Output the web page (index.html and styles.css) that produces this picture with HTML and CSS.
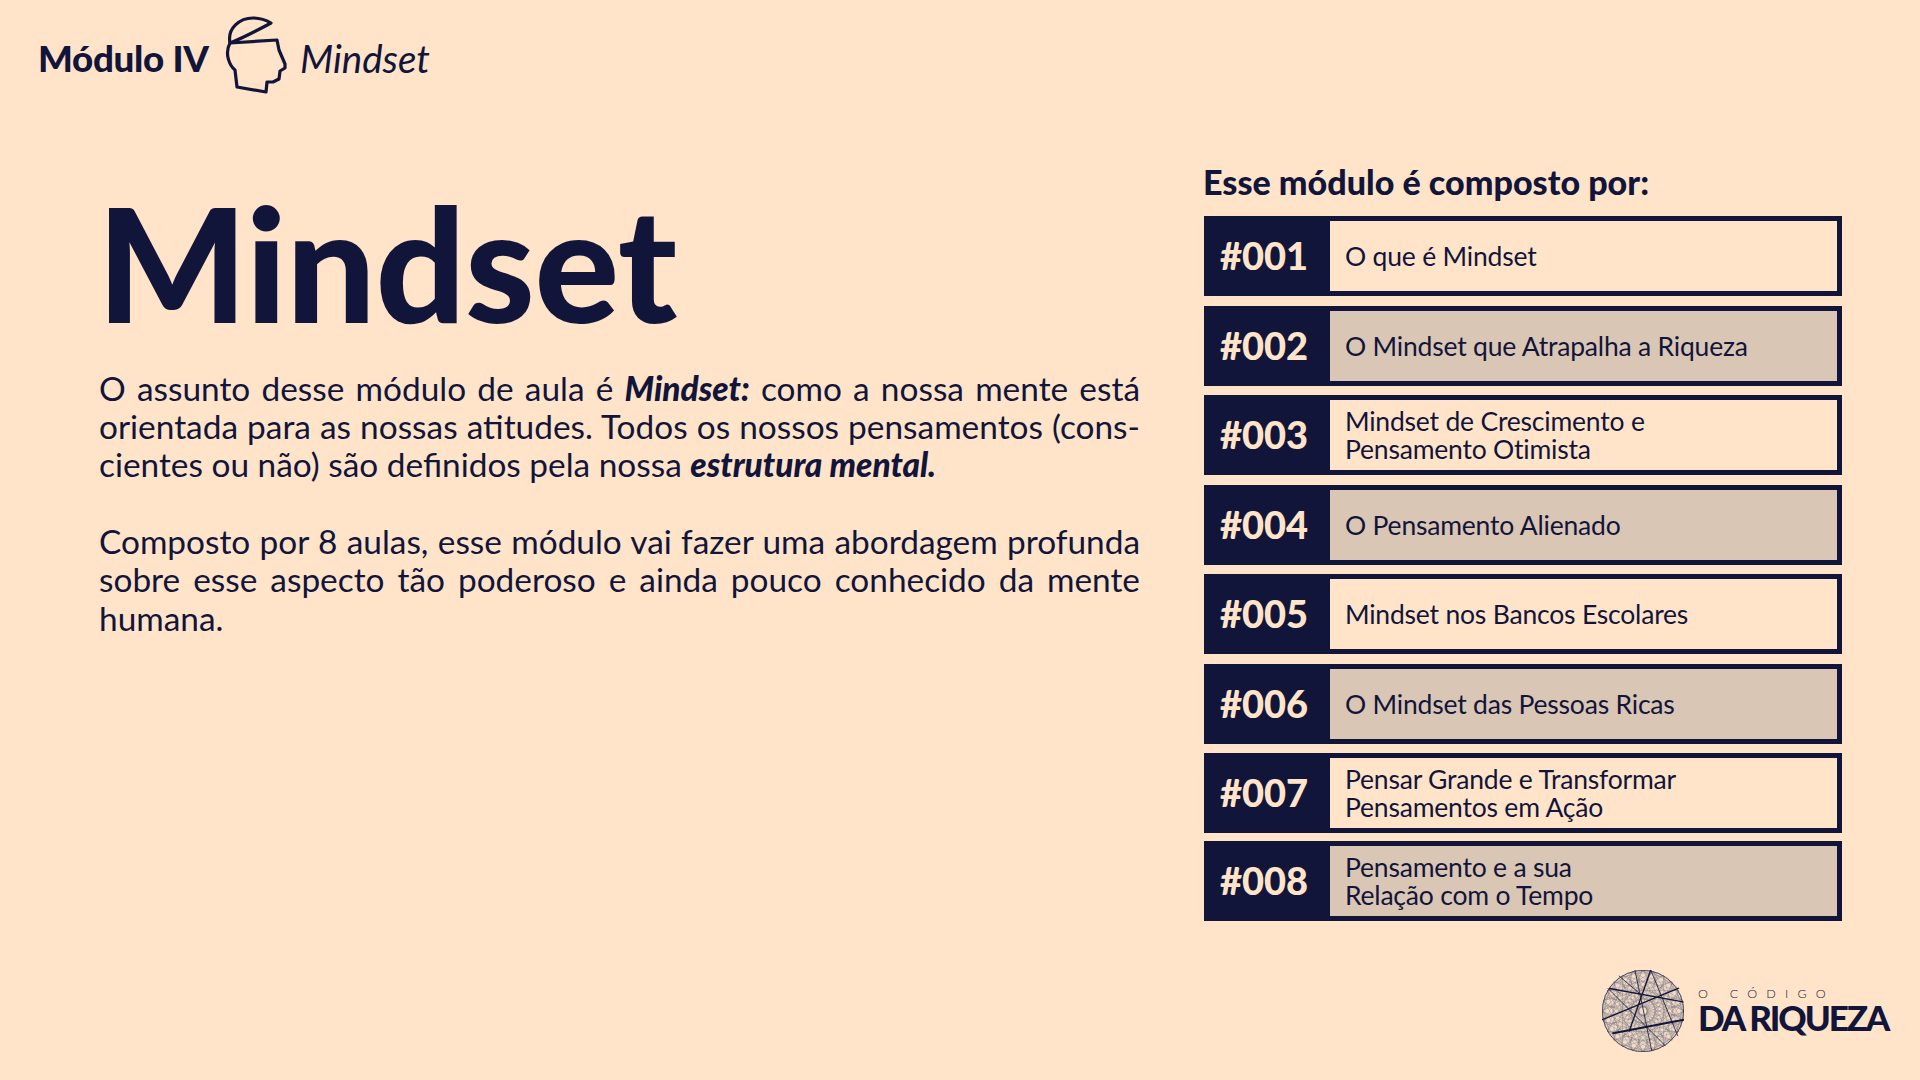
FILE: index.html
```html
<!DOCTYPE html>
<html lang="pt-BR">
<head>
<meta charset="utf-8">
<title>Mindset</title>
<link rel="stylesheet" href="styles.css">
</head>
<body>
<div class="slide">
  <header class="top">
    <span class="mod">Módulo IV</span>
    <svg class="head" viewBox="225 15 64 80" fill="none" stroke="#12153a" stroke-width="3.200" stroke-linecap="round" stroke-linejoin="round">
      <path d="M230 43 C227 28 240 18 253 18 C260 18 266 20 271 23 C258 30 243 38 230 43 Z"/>
      <path d="M230 43 L277 40 L279 50 L285 64 L285 68 L280 71 L279 79 L273 82 L267 82 L266 92 L237 87 L235 70 C230 66 224 54 230 43 Z"/>
    </svg>
    <span class="sub">Mindset</span>
  </header>
  <main class="content">
    <section class="left">
      <h1 class="title">Mindset</h1>
      <p class="para">
        <span class="line">O assunto desse módulo de aula é <b>Mindset:</b> como a nossa mente está</span>
        <span class="line">orientada para as nossas atitudes. Todos os nossos pensamentos (cons-</span>
        <span class="line last">cientes ou não) são definidos pela nossa <b>estrutura mental.</b></span>
      </p>
      <p class="para">
        <span class="line">Composto por 8 aulas, esse módulo vai fazer uma abordagem profunda</span>
        <span class="line">sobre esse aspecto tão poderoso e ainda pouco conhecido da mente</span>
        <span class="line last">humana.</span>
      </p>
    </section>
    <section class="right">
      <h2 class="lead">Esse módulo é composto por:</h2>
      <ul class="list">
        <li class="row"><span class="num">#001</span><span class="name">O que é Mindset</span></li>
        <li class="row alt"><span class="num">#002</span><span class="name">O Mindset que Atrapalha a Riqueza</span></li>
        <li class="row"><span class="num">#003</span><span class="name">Mindset de Crescimento e<br>Pensamento Otimista</span></li>
        <li class="row alt"><span class="num">#004</span><span class="name">O Pensamento Alienado</span></li>
        <li class="row"><span class="num">#005</span><span class="name">Mindset nos Bancos Escolares</span></li>
        <li class="row alt"><span class="num">#006</span><span class="name">O Mindset das Pessoas Ricas</span></li>
        <li class="row"><span class="num">#007</span><span class="name">Pensar Grande e Transformar<br>Pensamentos em Ação</span></li>
        <li class="row alt"><span class="num">#008</span><span class="name">Pensamento e a sua<br>Relação com o Tempo</span></li>
      </ul>
    </section>
  </main>
  <footer class="brand">
    <svg class="globe" viewBox="37 30 244 244" fill="none" stroke="#12153a" stroke-linecap="round">
      <circle cx="159" cy="152" r="121" fill="#f0dcc9" stroke-width="2"/>
      <defs>
        <path id="c" d="M113 -46V46M-113 -46V46M86 -86V86M-86 -86V86M61 -105V105M-61 -105V105M35 -116V116M-35 -116V116M12 -121V121M-12 -121V121"/>
      </defs>
      <g transform="translate(159 152)" stroke-width="0.800" opacity="0.6">
        <use href="#c"/>
        <use href="#c" transform="rotate(15)"/>
        <use href="#c" transform="rotate(30)"/>
        <use href="#c" transform="rotate(45)"/>
        <use href="#c" transform="rotate(60)"/>
        <use href="#c" transform="rotate(75)"/>
        <use href="#c" transform="rotate(90)"/>
        <use href="#c" transform="rotate(105)"/>
        <use href="#c" transform="rotate(120)"/>
        <use href="#c" transform="rotate(135)"/>
        <use href="#c" transform="rotate(150)"/>
        <use href="#c" transform="rotate(165)"/>
      </g>
      <path stroke-width="4" d="M182 30 L118 212 M60 85 L278 125 M38 178 L265 84"/>
      <path stroke-width="6" d="M70 218 L280 178"/>
      <path stroke-width="2.400" d="M182 30 L262 225 M55 85 L225 255 M88 48 L155 105 M135 30 L185 270"/>
    </svg>
    <div class="brand-text">
      <span class="small">O CÓDIGO</span>
      <span class="big">DA RIQUEZA</span>
    </div>
  </footer>
</div>
</body>
</html>
```
FILE: styles.css
```css
* { box-sizing: border-box; margin: 0; padding: 0; }
html, body { width: 1920px; height: 1080px; overflow: hidden; }
body { background: #ffe4ca; color: #12153a; font-family: "Lato", "Noto Sans", sans-serif; }
.slide { width: 1920px; height: 1080px; display: flex; flex-direction: column; position: relative; }
.top { display: flex; align-items: center; height: 92px; margin-top: 12px; padding-left: 38px; }
.mod { font-size: 36.700px; font-weight: 900; width: 187px; letter-spacing: -0.3px; }
.head { width: 64px; height: 80px; margin-right: 11px; margin-bottom: 6px; }
.sub { font-size: 38.500px; font-style: italic; font-weight: 400; }
.content { display: flex; padding-left: 99px; padding-top: 2px; }
.left { width: 1041px; margin-right: 64px; padding-top: 97px; }
.title { font-size: 158px; line-height: 110px; font-weight: 900; letter-spacing: -0.5px; margin-left: -2px; padding-top: 4px; height: 114px; margin-bottom: 51.500px; }
.para { font-size: 33.400px; line-height: 38.400px; font-weight: 400; margin-bottom: 38px; }
.line { display: block; white-space: nowrap; text-align: justify; text-align-last: justify; }
.line.last { text-align-last: left; }
.para b { font-weight: 900; font-style: italic; }
.right { width: 638px; padding-top: 58px; }
.lead { font-size: 34.100px; font-weight: 900; line-height: 36px; margin-bottom: 16px; height: 36px; margin-left: -1px; }
.list { list-style: none; display: flex; flex-direction: column; gap: 9.500px; }
.row { display: flex; height: 80px; background: #12153a; }
.row:last-child { margin-top: -1.500px; }
.num { width: 126px; padding-left: 16px; padding-bottom: 2px; color: #ffe4ca; font-size: 38px; font-weight: 900; align-self: center; }
.name { flex: 1; margin: 5px 5px 5px 0; background: #ffe4ca; padding-left: 15px; font-size: 26.500px; letter-spacing: -0.2px; line-height: 28px; font-weight: 400; display: flex; align-items: center; }
.alt .name { background: #dac6b4; }
.brand { position: absolute; left: 1602px; top: 970px; display: flex; align-items: center; gap: 14px; }
.globe { width: 82px; height: 82px; }
.brand-text { display: flex; flex-direction: column; margin-bottom: 2px; }
.small { font-size: 12.500px; letter-spacing: 9.200px; font-weight: 300; line-height: 14px; white-space: nowrap; }
.big { font-size: 35px; font-weight: 900; line-height: 32px; letter-spacing: -2.100px; white-space: nowrap; }
```
